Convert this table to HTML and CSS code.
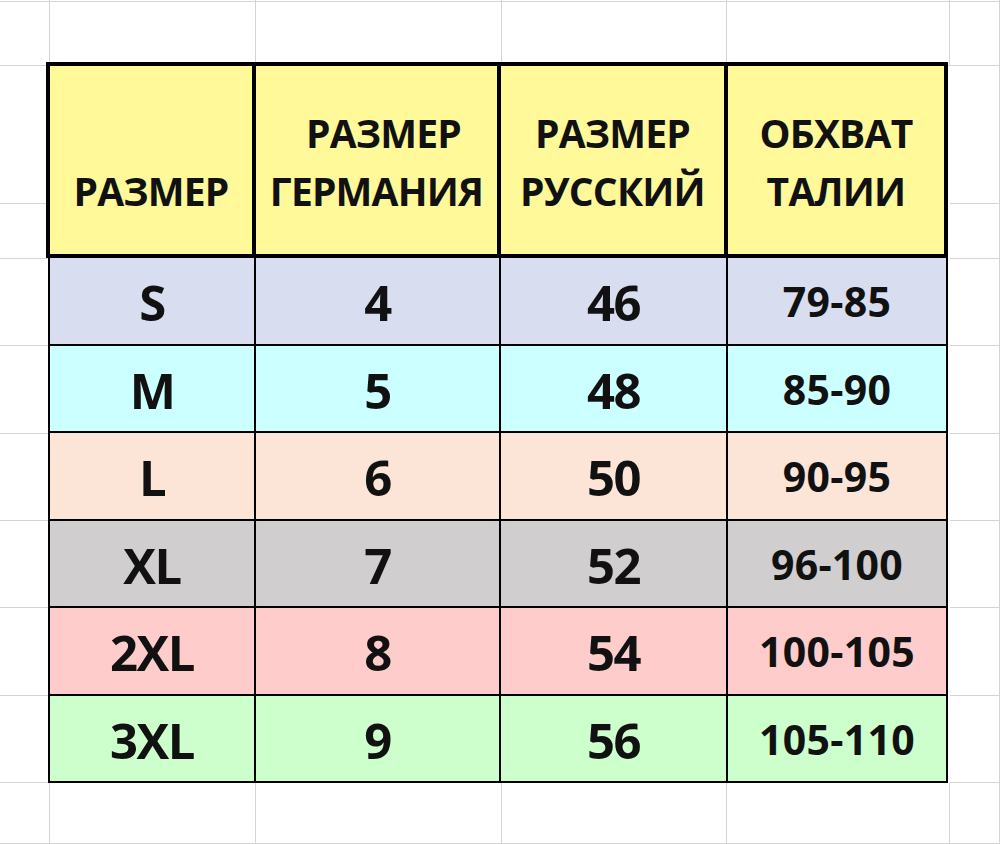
FILE: index.html
```html
<!DOCTYPE html>
<html lang="ru">
<head>
<meta charset="utf-8">
<title>Таблица размеров</title>
<link rel="stylesheet" href="styles.css">
</head>
<body>
<div class="sheet">
  <div class="c"></div><div class="c"></div><div class="c"></div><div class="c"></div><div class="c"></div><div class="c"></div>
  <div class="c"></div><div class="c"></div><div class="c"></div><div class="c"></div><div class="c"></div><div class="c"></div>
  <div class="c"></div><div class="c"></div>
  <div class="c"></div><div class="c"></div>
  <div class="c"></div><div class="c"></div>
  <div class="c"></div><div class="c"></div>
  <div class="c"></div><div class="c"></div>
  <div class="c"></div><div class="c"></div>
  <div class="c"></div><div class="c"></div>
  <div class="c"></div><div class="c"></div>
  <div class="c"></div><div class="c"></div><div class="c"></div><div class="c"></div><div class="c"></div><div class="c"></div>

  <div class="tbl">
    <div class="h first"><span>РАЗМЕР</span></div>
    <div class="h"><span class="shift">РАЗМЕР</span><span>ГЕРМАНИЯ</span></div>
    <div class="h"><span>РАЗМЕР</span><span>РУССКИЙ</span></div>
    <div class="h"><span>ОБХВАТ</span><span>ТАЛИИ</span></div>

    <div class="row s"><div class="d first">S</div><div class="d">4</div><div class="d">46</div><div class="d w">79-85</div></div>
    <div class="row m"><div class="d first">M</div><div class="d">5</div><div class="d">48</div><div class="d w">85-90</div></div>
    <div class="row l"><div class="d first">L</div><div class="d">6</div><div class="d">50</div><div class="d w">90-95</div></div>
    <div class="row xl"><div class="d first">XL</div><div class="d">7</div><div class="d">52</div><div class="d w">96-100</div></div>
    <div class="row xxl"><div class="d first">2XL</div><div class="d">8</div><div class="d">54</div><div class="d w">100-105</div></div>
    <div class="row xxxl"><div class="d first">3XL</div><div class="d">9</div><div class="d">56</div><div class="d w">105-110</div></div>
  </div>
</div>
</body>
</html>
```
FILE: styles.css
```css
html, body {
  margin: 0;
  padding: 0;
  background: #ffffff;
}

body {
  width: 1000px;
  height: 844px;
  overflow: hidden;
  font-family: "Open Sans", "Noto Sans", sans-serif;
  font-weight: 700;
  color: #111111;
}

.sheet {
  display: grid;
  grid-template-columns: 50px 206px 246px 225px 223px 50px;
  grid-template-rows: 2px 64px 138px 55px 87px 88px 87px 87px 88px 87px 61px;
  width: 1000px;
  height: 844px;
}

.c {
  box-sizing: border-box;
  border-right: 1px solid #d4d4d4;
  border-bottom: 1px solid #d4d4d4;
}

.tbl {
  grid-column: 2 / 6;
  grid-row: 3 / 11;
  margin: -4px 2px 0 -4px;
  display: grid;
  grid-template-columns: 210px 245px 227px 220px;
  grid-template-rows: 196px 88px 87px 88px 87px 88px 87px;
}

.h {
  box-sizing: border-box;
  background: #fff99a;
  border-top: 4px solid #000;
  border-right: 4px solid #000;
  border-bottom: 4px solid #000;
  display: flex;
  flex-direction: column;
  justify-content: flex-end;
  align-items: center;
  padding-bottom: 34px;
  font-size: 39px;
  line-height: 58px;
  letter-spacing: -0.8px;
  white-space: nowrap;
}

.h.first {
  border-left: 4px solid #000;
}

.h .shift {
  padding-left: 14px;
}

.row {
  display: contents;
}

.d {
  box-sizing: border-box;
  border-right: 2px solid #000;
  border-bottom: 2px solid #000;
  display: flex;
  align-items: center;
  justify-content: center;
  padding-top: 3px;
  font-size: 49px;
  line-height: 1;
  letter-spacing: -1.5px;
  white-space: nowrap;
}

.d.first {
  margin-left: 2px;
  border-left: 2px solid #000;
}

.d.w {
  font-size: 41px;
  letter-spacing: 0.3px;
  padding-top: 1px;
}

.s .d { background: #d9ddf0; }
.m .d { background: #ccffff; }
.l .d { background: #fce4d6; }
.xl .d { background: #d0cece; }
.xxl .d { background: #ffcccc; }
.xxxl .d { background: #ccffcc; }
```
